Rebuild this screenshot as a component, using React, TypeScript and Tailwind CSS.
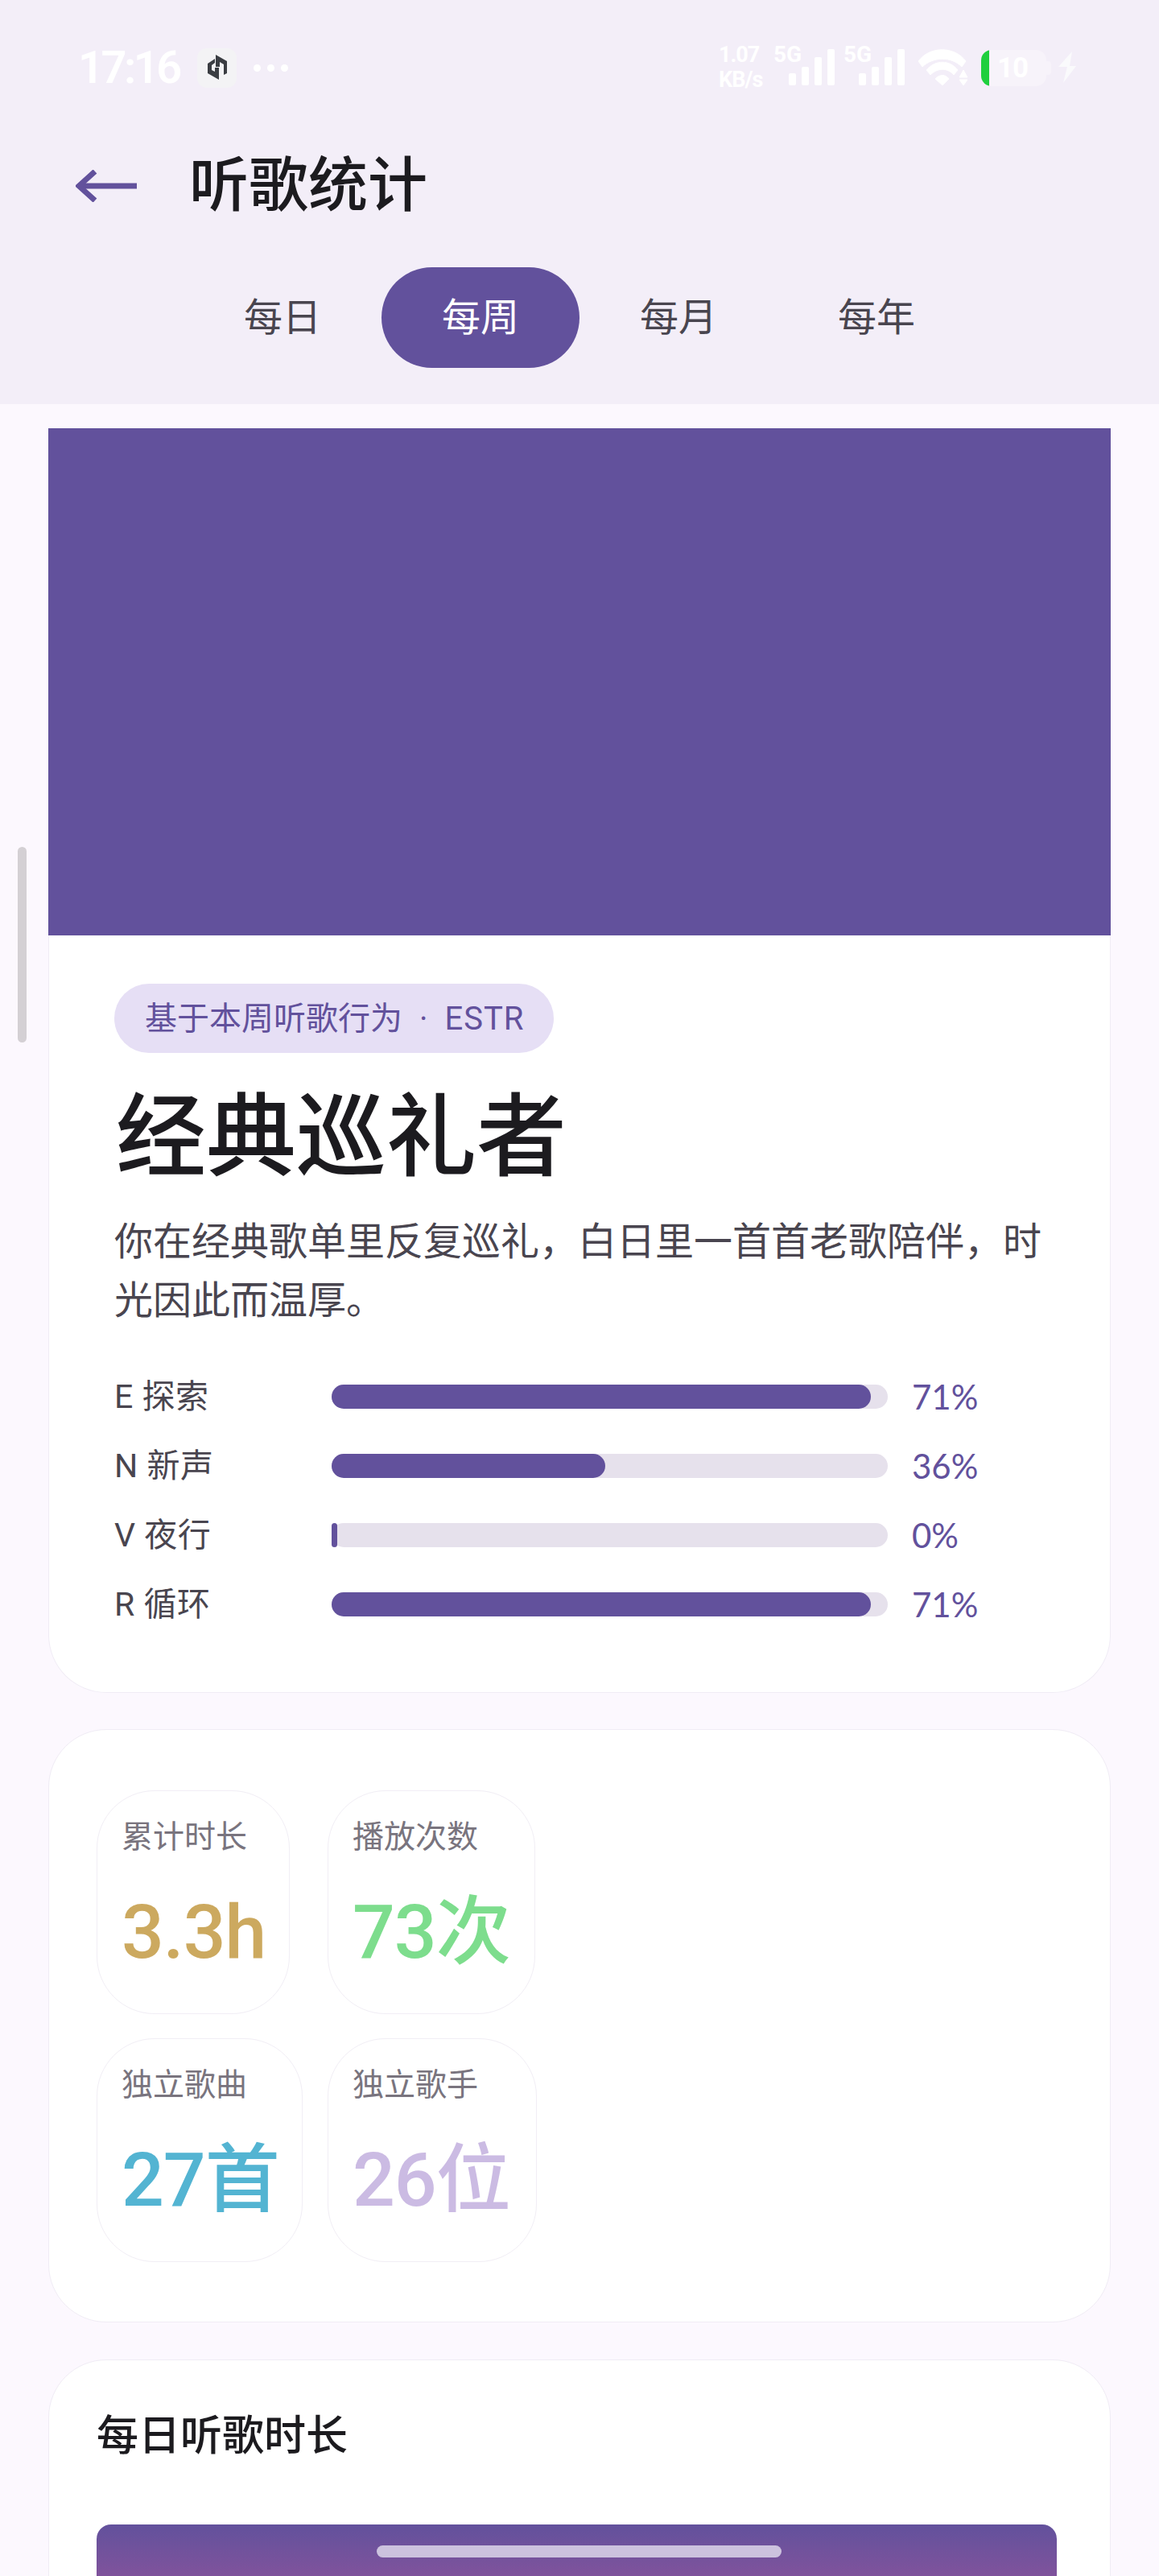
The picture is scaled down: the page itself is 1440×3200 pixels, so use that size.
import React from 'react';

const PRIMARY = '#62519c';

const dims = [
    { label: 'E 探索', fill: 670, pct: '71%' },
    { label: 'N 新声', fill: 340, pct: '36%' },
    { label: 'V 夜行', fill: 7, pct: '0%' },
    { label: 'R 循环', fill: 670, pct: '71%' },
];

const stats = [
    { label: '累计时长', value: '3.3h', cls: 'w-[240px] text-[#cca95f]' },
    { label: '播放次数', value: '73次', cls: 'w-[258px] text-[#7ddd8d]' },
    { label: '独立歌曲', value: '27首', cls: 'w-[256px] text-[#53b4d2]' },
    { label: '独立歌手', value: '26位', cls: 'w-[260px] text-[#cbbbe3]' },
];

const tabs = ['每日', '每周', '每月', '每年'];

function SignalBars() {
    return (
        <svg width="58" height="46" viewBox="0 0 58 46" fill="#ffffff">
            <rect x="0" y="30" width="9" height="15" rx="2" />
            <rect x="16" y="22" width="9" height="23" rx="2" />
            <rect x="32" y="10" width="9" height="35" rx="2" />
            <rect x="48" y="0" width="9" height="45" rx="2" />
        </svg>
    );
}

function StatusBar() {
    return (
        <div className="h-[168px] pl-[97px] pr-[102px] flex items-center justify-between">
            <div className="flex items-center">
                <span className="w-[127px] text-[56px] leading-none font-semibold tracking-[-3.5px] text-white font-['Roboto',sans-serif]">17:16</span>
                <div className="ml-[21px] w-[49px] h-[49px] rounded-[12px] bg-[#f3f3f5] flex items-center justify-center">
                    <svg width="26" height="32" viewBox="0 0 26 32" fill="#3a3d42">
                        <path d="M10 5 L1 11 V23 L15 31 V16 H10 V21 L6 19 V13 L10 10 Z" />
                        <path d="M11 0 L25 8 V23 L21 25 V12 L16 9 V15 H11 Z" />
                    </svg>
                </div>
                <div className="ml-[21px] flex gap-[8px]">
                    <span className="w-[9px] h-[9px] rounded-full bg-white" />
                    <span className="w-[9px] h-[9px] rounded-full bg-white" />
                    <span className="w-[9px] h-[9px] rounded-full bg-white" />
                </div>
            </div>
            <div className="flex items-center text-white font-['Roboto',sans-serif] font-bold">
                <div className="w-[64px] text-[27px] leading-[31px] tracking-[-1px] flex flex-col">
                    <span>1.07</span>
                    <span>KB/s</span>
                </div>
                <div className="relative w-[87px] h-[46px] ml-[4px]">
                    <span className="absolute left-0 top-[-9px] text-[28px] leading-[32px]">5G</span>
                    <div className="absolute left-[19px] top-0"><SignalBars /></div>
                </div>
                <div className="relative w-[76px] h-[46px]">
                    <span className="absolute left-0 top-[-9px] text-[28px] leading-[32px]">5G</span>
                    <div className="absolute left-[19px] top-0"><SignalBars /></div>
                </div>
                <svg className="ml-[16px]" width="64" height="46" viewBox="0 0 64 46" fill="#ffffff" stroke="#ffffff" strokeWidth="1" strokeLinejoin="round">
                    <path d="M1 15 C15 -4 46 -4 60 15 L55 22 C42 9 20 9 6 22 Z" />
                    <path d="M11 26 C22 13 40 13 50 26 L45 32 C37 23 25 23 16 32 Z" />
                    <path d="M22 37 C27 31 35 31 39 37 L31 45 Z" />
                    <path d="M57 26 L52 35 H62 Z" />
                    <path d="M52 38 H62 L57 45 Z" />
                </svg>
                <div className="flex items-center ml-[15px]">
                    <div className="relative w-[81px] h-[45px] rounded-[13px] bg-[#f7f3fa] overflow-hidden">
                        <div className="w-[10px] h-full bg-[#1fcf3e]" />
                        <span className="absolute left-[20px] top-[7px] text-[35px] leading-[31px] font-bold tracking-[-1px]">10</span>
                    </div>
                    <div className="w-[6px] h-[17px] rounded-r-[4px] bg-[#f7f3fa]" />
                </div>
                <svg className="ml-[9px]" width="23" height="40" viewBox="0 0 23 40" fill="#fafafc">
                    <path d="M17 0 L0 19 H11 L6 39 L22 18 H14 Z" />
                </svg>
            </div>
        </div>
    );
}

export default function App() {
    return (
        <div className="relative h-[3200px] overflow-hidden bg-[#fcf8fe] font-['Roboto','Noto_Sans_CJK_SC',sans-serif]">
            <header className="h-[502px] bg-[#f3eef8]">
                <StatusBar />
                <div className="h-[126px] flex items-center pl-[94px]">
                    <svg width="76" height="40" viewBox="0 0 76 40" fill="none" stroke={PRIMARY} strokeWidth="7">
                        <path d="M76 20 H4" />
                        <path d="M24 2 L4 20 L24 38" />
                    </svg>
                    <h1 className="ml-[65px] text-[74px] leading-none font-medium text-[#1c1b1f]">听歌统计</h1>
                </div>
                <div className="mt-[38px] flex justify-center">
                    {tabs.map((t) => (
                        <div
                            key={t}
                            className={
                                t === '每周'
                                    ? 'w-[246px] h-[125px] rounded-full flex items-center justify-center text-[48px] bg-[#62519c] text-white'
                                    : 'w-[246px] h-[125px] rounded-full flex items-center justify-center text-[48px] text-[#49454f]'
                            }
                        >
                            {t}
                        </div>
                    ))}
                </div>
            </header>

            <main className="pt-[30px] px-[60px]">
                <section>
                    <div className="h-[630px] bg-[#62519c]" />
                    <div className="bg-white border-x border-b border-[#f0ecf5] rounded-b-[72px] pt-[60px] pl-[81px] pr-[60px] pb-[66px]">
                        <div className="w-fit h-[86px] pt-[2px] pl-[38px] pr-[37px] rounded-full bg-[#e6dff5] flex items-center text-[40px] text-[#62519c]">
                            <span>基于本周听歌行为</span>
                            <span className="mx-[21px]">·</span>
                            <span className="tracking-[1px]">ESTR</span>
                        </div>
                        <h2 className="mt-[36px] ml-[2px] text-[112px] leading-[140px] font-medium text-[#1c1b1f]">经典巡礼者</h2>
                        <p className="mt-[22px] text-[48px] leading-[73px] text-[#49454f]">你在经典歌单里反复巡礼，白日里一首首老歌陪伴，时光因此而温厚。</p>
                        <div className="mt-[40px] flex flex-col">
                            {dims.map((d) => (
                                <div key={d.label} className="h-[86px] flex items-center">
                                    <span className="w-[270px] pt-[2px] text-[41px] tracking-[0.5px] text-[#49454f]">{d.label}</span>
                                    <div className="w-[691px] h-[30px] rounded-full bg-[#e6e1ec]">
                                        <div className="h-full rounded-full bg-[#62519c]" style={{ width: `${d.fill}px` }} />
                                    </div>
                                    <span className="ml-[30px] text-[42px] text-[#62519c] font-['Lato',sans-serif]">{d.pct}</span>
                                </div>
                            ))}
                        </div>
                    </div>
                </section>

                <section className="mt-[45px] bg-white border border-[#f0ecf5] rounded-[72px] pl-[59px] pt-[75px] pb-[74px]">
                    <div className="grid grid-cols-[256px_260px] gap-x-[31px] gap-y-[30px]">
                        {stats.map((s) => (
                            <div key={s.label} className={`${s.cls} h-[278px] rounded-[72px] border border-[#f1eef5] pl-[30px]`}>
                                <div className="mt-[30px] text-[39px] leading-[54px] text-[#79747e]">{s.label}</div>
                                <div className="mt-[32px] text-[93px] leading-[120px] font-medium tracking-[-1px]">{s.value}</div>
                            </div>
                        ))}
                    </div>
                </section>

                <section className="mt-[46px] h-[400px] bg-white border border-[#f0ecf5] rounded-[72px] pl-[59px] pt-[65px]">
                    <h3 className="text-[52px] leading-[60px] font-medium text-[#1c1b1f]">每日听歌时长</h3>
                    <div className="mt-[79px] w-[1193px] h-[200px] rounded-t-[18px] bg-gradient-to-b from-[#62519c] to-[#bc4f9b]" />
                </section>
            </main>

            {/* scrollbar + gesture bar sit over the page */}
            <div className="absolute left-[22px] top-[1052px] w-[11px] h-[243px] rounded-full bg-[#d4d0d4]" />
            <div className="absolute left-[468px] top-[3162px] w-[503px] h-[15px] rounded-full bg-[#ccc2de]" />
        </div>
    );
}
